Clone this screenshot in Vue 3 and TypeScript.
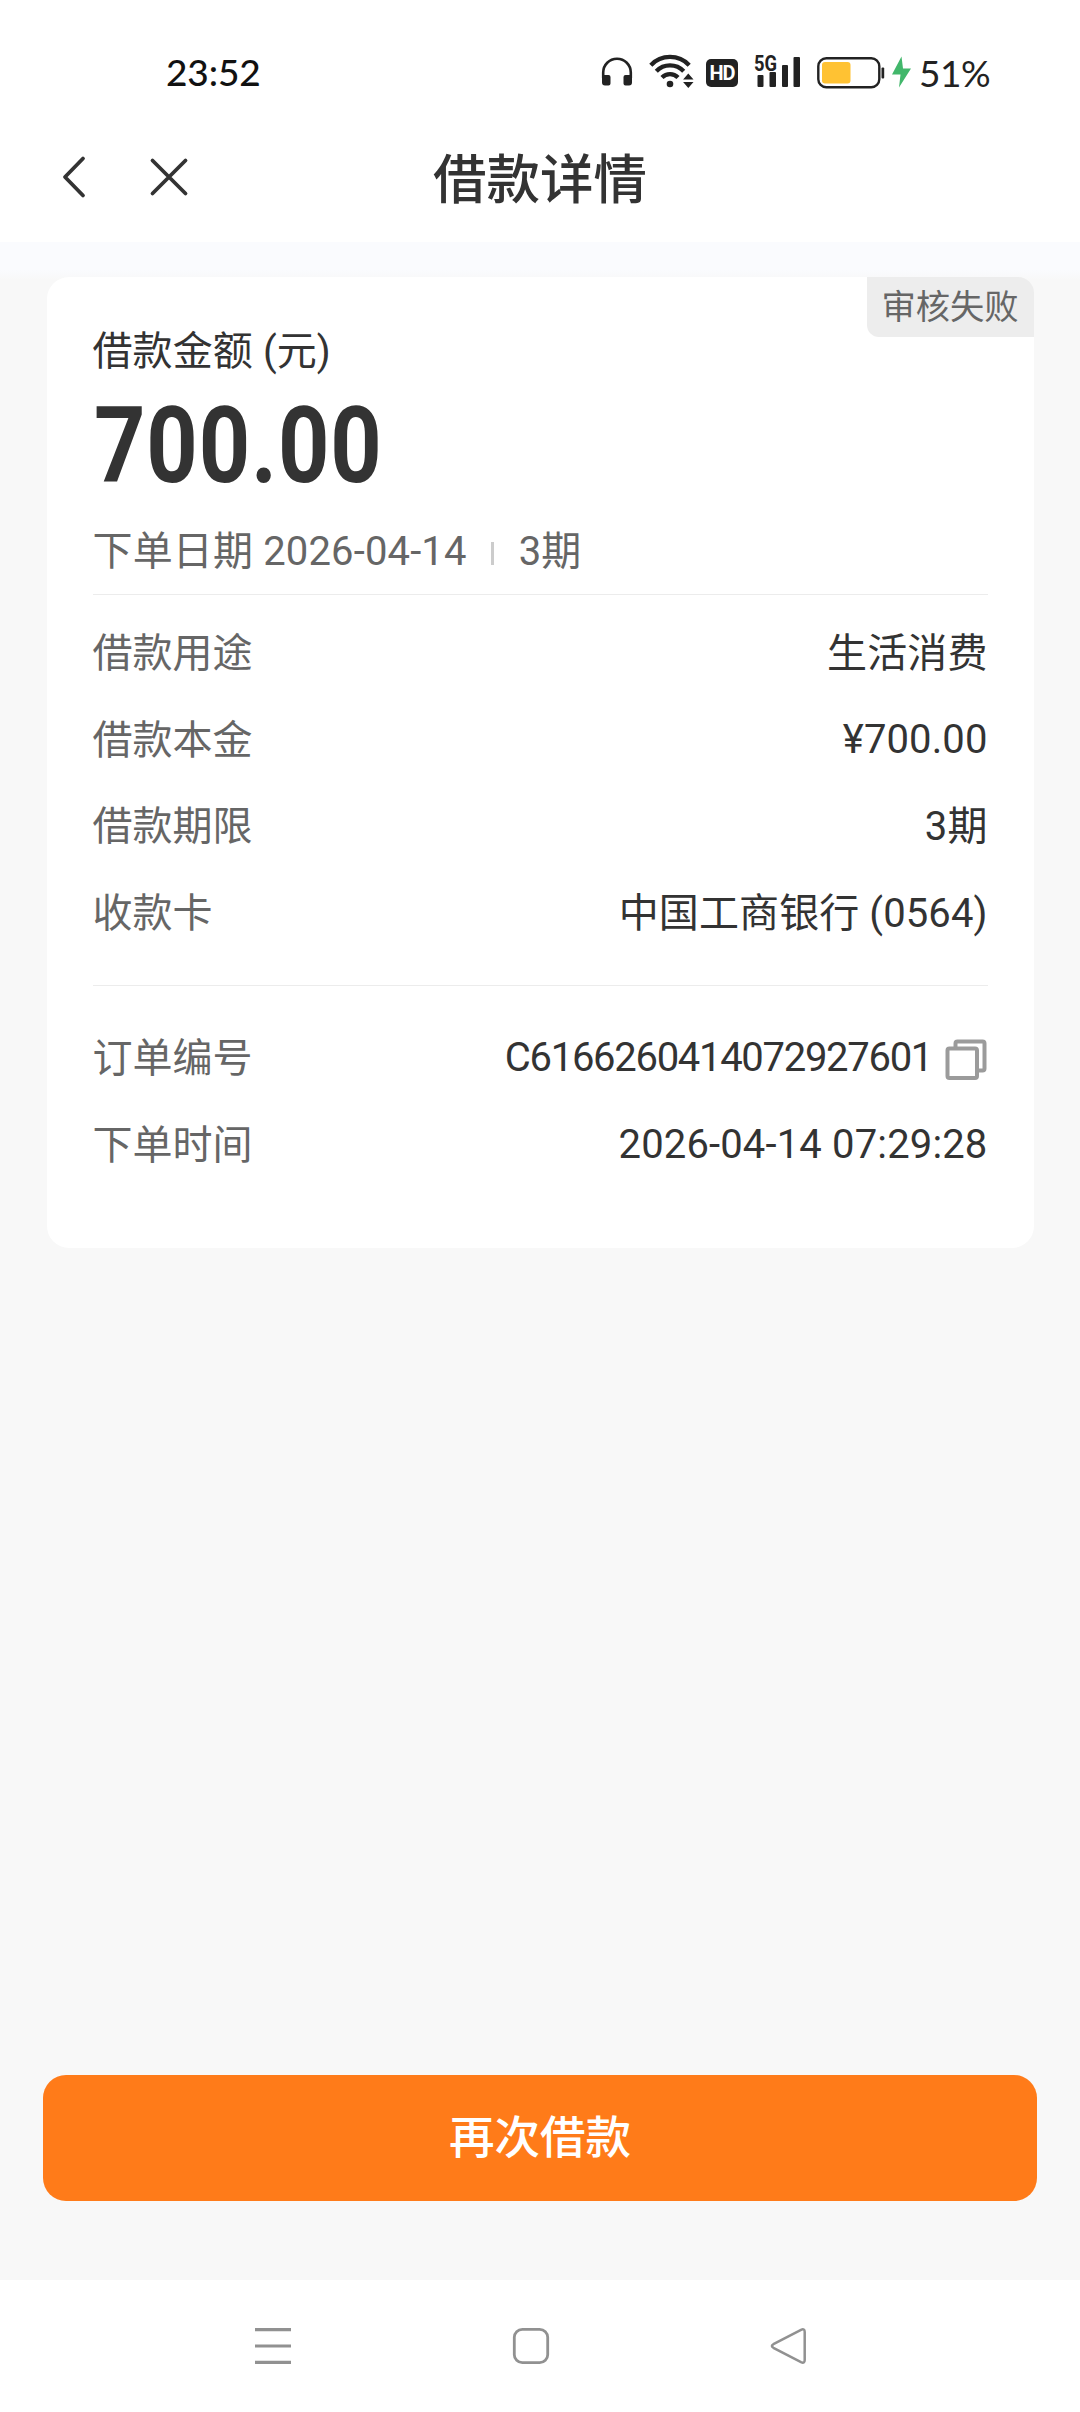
<script setup lang="ts">
interface DetailRow {
  label: string
  value: string
  kind?: 'latin' | 'order' | 'time'
}

const loanRows: DetailRow[] = [
  { label: '借款用途', value: '生活消费' },
  { label: '借款本金', value: '¥700.00', kind: 'latin' },
  { label: '借款期限', value: '3期' },
  { label: '收款卡', value: '中国工商银行 (0564)' },
]

const orderRows: DetailRow[] = [
  { label: '订单编号', value: 'C6166260414072927601', kind: 'order' },
  { label: '下单时间', value: '2026-04-14 07:29:28', kind: 'time' },
]
</script>

<template>
  <div class="screen">
    <div class="status">
      <span class="clock">23:52</span>
      <div class="indicators">
        <svg class="headset" width="32" height="30" viewBox="0 0 32 30">
          <path d="M2.2 21V15.5a13.8 13.8 0 0 1 27.6 0V21" fill="none" stroke="#222" stroke-width="2.6" />
          <path d="M1 18h6.5a2 2 0 0 1 2 2v6.5a2 2 0 0 1-2 2H4a3 3 0 0 1-3-3zM31 18h-6.500a2 2 0 0 0-2 2v6.500a2 2 0 0 0 2 2H28a3 3 0 0 0 3-3z" fill="#222" />
        </svg>
        <svg class="wifi" width="46" height="36" viewBox="0 0 46 36">
          <g fill="none" stroke="#222" stroke-width="4.300">
            <path d="M1.800 12.200a26.500 26.500 0 0 1 38.400 0" />
            <path d="M7.300 18.200a19 19 0 0 1 27.400 0" />
            <path d="M13 24.500a11.200 11.200 0 0 1 16 0" />
          </g>
          <circle cx="21" cy="31" r="3.300" fill="#222" />
          <path d="M39.300 20.500l5.200 6H34.100zM39.300 35l5.200-6H34.100z" fill="#222" />
        </svg>
        <span class="hd">HD</span>
        <svg class="signal" width="48" height="44" viewBox="0 -10 48 44">
          <text x="0" y="17" textLength="23" lengthAdjust="spacingAndGlyphs" class="net">5G</text>
          <g fill="#222">
            <rect x="3.500" y="21" width="6" height="12" rx="1" />
            <rect x="15.500" y="18" width="6.500" height="15" rx="1" />
            <rect x="28" y="11" width="6" height="22" rx="1" />
            <rect x="39.500" y="3" width="6.500" height="30" rx="1" />
          </g>
        </svg>
        <svg class="battery" width="69" height="32" viewBox="0 0 69 32">
          <rect x="1.300" y="1.300" width="61" height="29" rx="8" fill="none" stroke="#222" stroke-width="2.400" />
          <rect x="5" y="5" width="28.500" height="21.500" rx="3" fill="#ffc233" />
          <rect x="64.500" y="10.500" width="2.700" height="11" rx="1" fill="#222" />
        </svg>
        <svg class="bolt" width="19" height="32" viewBox="0 0 19 32">
          <path d="M9.500 0.500L0 18.500h8.500L7 31.500 19 12.500h-8z" fill="#42b76b" />
        </svg>
        <span class="percent">51%</span>
      </div>
    </div>

    <header class="header">
      <svg class="back" width="30" height="46" viewBox="0 0 30 46">
        <path d="M25 4.500L7 23 25 41.500" fill="none" stroke="#333" stroke-width="3.800" stroke-linecap="round" stroke-linejoin="round" />
      </svg>
      <svg class="close" width="40" height="40" viewBox="0 0 40 40">
        <path d="M3.500 3.500l33 33M36.500 3.500l-33 33" fill="none" stroke="#333" stroke-width="3.800" stroke-linecap="round" />
      </svg>
      <h1 class="title">借款详情</h1>
    </header>

    <main class="content">
      <section class="card">
        <span class="tag">审核失败</span>
        <div class="caption">借款金额 (元)</div>
        <div class="amount">700.00</div>
        <div class="summary">
          <span>下单日期 2026-04-14</span>
          <i class="bar"></i>
          <span>3期</span>
        </div>
        <div class="group">
          <div v-for="row in loanRows" :key="row.label" class="row">
            <span class="label">{{ row.label }}</span>
            <span class="value" :class="row.kind">{{ row.value }}</span>
          </div>
        </div>
        <div class="group orders">
          <div v-for="row in orderRows" :key="row.label" class="row">
            <span class="label">{{ row.label }}</span>
            <span class="value" :class="row.kind">
              <span>{{ row.value }}</span>
              <svg v-if="row.kind === 'order'" class="copy" width="42" height="42" viewBox="0 0 42 42">
                <g fill="none" stroke="#9b9b9b" stroke-width="4">
                  <path d="M10.500 8V4.500a2 2 0 0 1 2-2H37.500a2 2 0 0 1 2 2V29.500a2 2 0 0 1-2 2H34" />
                  <rect x="2.500" y="9.500" width="29.500" height="29.500" rx="2" />
                </g>
              </svg>
            </span>
          </div>
        </div>
      </section>
      <button class="again" type="button">再次借款</button>
    </main>

    <nav class="nav">
      <svg width="38" height="38" viewBox="0 0 38 38">
        <path d="M1 2.700h36M1 19h36M1 35.300h36" stroke="#919191" stroke-width="3.200" />
      </svg>
      <svg width="38" height="38" viewBox="0 0 38 38">
        <rect x="2.300" y="2.300" width="33.400" height="33.400" rx="8" fill="none" stroke="#919191" stroke-width="2.800" />
      </svg>
      <svg width="38" height="38" viewBox="0 0 38 38">
        <path d="M3.400 17.200L31 2.800Q34.700 1.200 34.700 5V33Q34.700 36.800 31 35.200L3.400 20.800Q.4 19 3.400 17.200z" fill="none" stroke="#919191" stroke-width="2.500" />
      </svg>
    </nav>
  </div>
</template>

<style>
body {
  margin: 0;
}
</style>

<style scoped>
.screen {
  display: flex;
  flex-direction: column;
  box-sizing: border-box;
  width: 1080px;
  height: 2412px;
  overflow: hidden;
  background: #f8f8f8;
  color: #333;
  font-family: Roboto, "Noto Sans CJK SC", sans-serif;
}

svg {
  display: block;
  flex: none;
}

.status {
  display: flex;
  justify-content: space-between;
  height: 120px;
  padding: 0 89px 0 166px;
  background: #fff;
}

.clock {
  margin-top: 50px;
  font: 500 37px/44px Lato, sans-serif;
  letter-spacing: -0.1px;
  color: #111;
}

.indicators {
  display: flex;
  align-items: flex-start;
}

.headset {
  margin-top: 57px;
}

.wifi {
  margin: 53px 0 0 16px;
}

.hd {
  width: 32px;
  height: 28px;
  margin: 59px 0 0 11px;
  border-radius: 5px;
  background: #222;
  color: #fff;
  font: 700 20px/29px Roboto, sans-serif;
  letter-spacing: -1px;
  text-align: center;
}

.signal {
  margin: 44px 0 0 16px;
}

.net {
  font: 700 22px Roboto, sans-serif;
  fill: #222;
}

.battery {
  margin: 57px 0 0 15px;
}

.bolt {
  margin: 56px 0 0 6px;
}

.percent {
  width: 72px;
  margin: 51px 0 0 8px;
  font: 400 37px/44px Lato, sans-serif;
  letter-spacing: -0.5px;
  color: #222;
  white-space: nowrap;
}

.header {
  display: grid;
  grid-template-columns: 58px 30px 61px 40px 1fr 189px;
  height: 122px;
  background: #fff;
}

.back {
  grid-column: 2;
  margin-top: 34px;
}

.close {
  grid-column: 4;
  margin-top: 37px;
}

.title {
  grid-column: 5;
  margin: 20.500px 0 0;
  font-size: 53.5px;
  font-weight: 500;
  line-height: 80px;
  text-align: center;
}

.content {
  display: flex;
  flex: 1;
  flex-direction: column;
  align-items: center;
  justify-content: space-between;
  padding: 35px 0 79px;
  background: linear-gradient(#fafbfe 28px, #f8f8f8 38px);
}

.card {
  position: relative;
  box-sizing: border-box;
  width: 987px;
  height: 971px;
  padding: 45px 46px 0 46px;
  border-radius: 22px;
  background: #fff;
}

.tag {
  position: absolute;
  top: 0;
  right: 0;
  width: 167px;
  height: 60px;
  border-radius: 0 16px 0 12px;
  background: #ededed;
  color: #666;
  font-size: 34.300px;
  line-height: 61px;
  text-align: center;
}

.caption {
  height: 60px;
  font-size: 40px;
  letter-spacing: 0.100px;
  line-height: 60px;
}

.amount {
  width: 320px;
  height: 110px;
  margin: 9px 0 0 1px;
  font-size: 106px;
  font-weight: 700;
  line-height: 110px;
  letter-spacing: 1px;
  transform: scaleX(0.847);
  transform-origin: left;
}

.summary {
  display: flex;
  align-items: center;
  height: 60px;
  margin-top: 21px;
  padding-bottom: 12px;
  color: #666;
  font-size: 40px;
  letter-spacing: 0.150px;
  line-height: 60px;
  white-space: nowrap;
}

.bar {
  width: 3px;
  height: 23px;
  margin: 2px 25px 0 24px;
  background: #ccc;
}

.group {
  height: 376px;
  padding-top: 14px;
  border-top: 1px solid #ececec;
}

.group.orders {
  height: auto;
  padding-top: 28px;
}

.row {
  display: flex;
  align-items: center;
  justify-content: space-between;
  height: 86.500px;
  font-size: 40px;
}

.label {
  padding-bottom: 4px;
  color: #666;
}

.value {
  display: flex;
  align-items: center;
  padding-bottom: 4px;
  letter-spacing: 0.100px;
}

.latin,
.order,
.time {
  padding: 1px 0 0;
}

.order {
  letter-spacing: -1.300px;
}

.time {
  letter-spacing: 0.150px;
}

.copy {
  margin: 4px 1px 0 12.500px;
}

.again {
  width: 994px;
  height: 126px;
  padding: 2px 0 0;
  border: 0;
  border-radius: 23px;
  background: #ff7b19;
  color: #fff;
  font: 500 45.500px/60px Roboto, "Noto Sans CJK SC", sans-serif;
}

.nav {
  display: flex;
  gap: 220px;
  height: 85px;
  padding: 47px 0 0 254px;
  background: #fff;
}
</style>
